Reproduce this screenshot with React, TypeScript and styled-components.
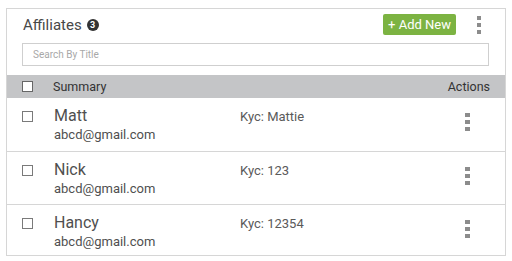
import React from 'react';
import styled, { createGlobalStyle } from 'styled-components';

const GlobalStyle = createGlobalStyle`
  html, body {
    margin: 0;
    padding: 0;
    background: #fff;
    font-family: Roboto, 'Liberation Sans', sans-serif;
  }
`;

const Card = styled.div`
  margin: 8px 0 0 6px;
  width: 498px;
  height: 246px;
  border: 1px solid #d6d6d6;
  background: #fff;
  overflow: hidden;
`;

const TopBar = styled.div`
  display: flex;
  align-items: center;
  height: 29px;
  padding: 1px 24px 0 16px;
`;

const Title = styled.h2`
  margin: 0;
  font-size: 15px;
  font-weight: 400;
  color: #484848;
  display: flex;
  align-items: center;
  gap: 5px;
`;

const CountBadge = styled.span`
  display: inline-flex;
  align-items: center;
  justify-content: center;
  width: 12px;
  height: 12px;
  border-radius: 50%;
  background: #333;
  color: #fff;
  font-size: 9px;
  font-weight: 700;
  margin-top: 1px;
`;

const Spacer = styled.div`
  flex: 1;
`;

const AddButton = styled.button`
  height: 21px;
  width: 73px;
  border: 0;
  border-radius: 2px;
  background: #7cb342;
  color: #fff;
  font-family: inherit;
  font-size: 13px;
  padding: 0;
  cursor: pointer;
  margin-right: 21px;
`;

const Kebab = styled.div<{ $size: number }>`
  display: flex;
  flex-direction: column;
  gap: 3px;

  span {
    display: block;
    width: ${({ $size }) => $size}px;
    height: 4px;
    background: #8c8c8c;
  }
`;

const SearchWrap = styled.div`
  padding: 4px 16px 0 15px;
`;

const SearchInput = styled.input`
  box-sizing: border-box;
  width: 100%;
  height: 23px;
  border: 1px solid #cfcfcf;
  padding: 0 10px;
  font-family: inherit;
  font-size: 10px;
  color: #444;
  outline: none;

  &::placeholder {
    color: #a8a8a8;
  }
`;

const HeadRow = styled.div`
  margin-top: 9px;
  height: 23px;
  background: #c4c5c7;
  display: grid;
  grid-template-columns: 31px 1fr auto;
  align-items: center;
  padding: 0 15px 0 15px;
  font-size: 12.5px;
  color: #333;
`;

const Check = styled.span`
  box-sizing: border-box;
  display: block;
  width: 11px;
  height: 11px;
  border: 1px solid #666;
  background: #fff;
`;

const Row = styled.div`
  display: grid;
  grid-template-columns: 32px 186px 1fr 40px;
  padding: 8px 0 0 15px;
  height: 53px;
  box-sizing: border-box;
  border-top: 1px solid #d6d6d6;

  &:first-of-type {
    border-top: 0;
  }
`;

const RowCheck = styled(Check)`
  margin-top: 5px;
  border-color: #7a7a7a;
`;

const Name = styled.div`
  font-size: 16px;
  color: #4f4f4f;
  line-height: 19px;
`;

const Email = styled.div`
  font-size: 13px;
  color: #4f4f4f;
  line-height: 16px;
  margin-top: 2px;
`;

const Kyc = styled.div`
  font-size: 13px;
  color: #5a5a5a;
  padding-top: 3px;
`;

const ActionCell = styled.div`
  padding-top: 7px;
`;

const rows = [
  { name: 'Matt', email: 'abcd@gmail.com', kyc: 'Mattie' },
  { name: 'Nick', email: 'abcd@gmail.com', kyc: '123' },
  { name: 'Hancy', email: 'abcd@gmail.com', kyc: '12354' },
];

function Dots({ size }: { size: number }) {
  return (
    <Kebab $size={size}>
      <span />
      <span />
      <span />
    </Kebab>
  );
}

export default function App() {
  return (
    <>
      <GlobalStyle />
      <Card>
        <TopBar>
          <Title>
            Affiliates <CountBadge>3</CountBadge>
          </Title>
          <Spacer />
          <AddButton>+ Add New</AddButton>
          <Dots size={4} />
        </TopBar>
        <SearchWrap>
          <SearchInput placeholder="Search By Title" />
        </SearchWrap>
        <HeadRow>
          <Check />
          <span>Summary</span>
          <span>Actions</span>
        </HeadRow>
        <div>
          {rows.map((r) => (
            <Row key={r.name}>
              <RowCheck />
              <div>
                <Name>{r.name}</Name>
                <Email>{r.email}</Email>
              </div>
              <Kyc>Kyc: {r.kyc}</Kyc>
              <ActionCell>
                <Dots size={5} />
              </ActionCell>
            </Row>
          ))}
        </div>
      </Card>
    </>
  );
}
